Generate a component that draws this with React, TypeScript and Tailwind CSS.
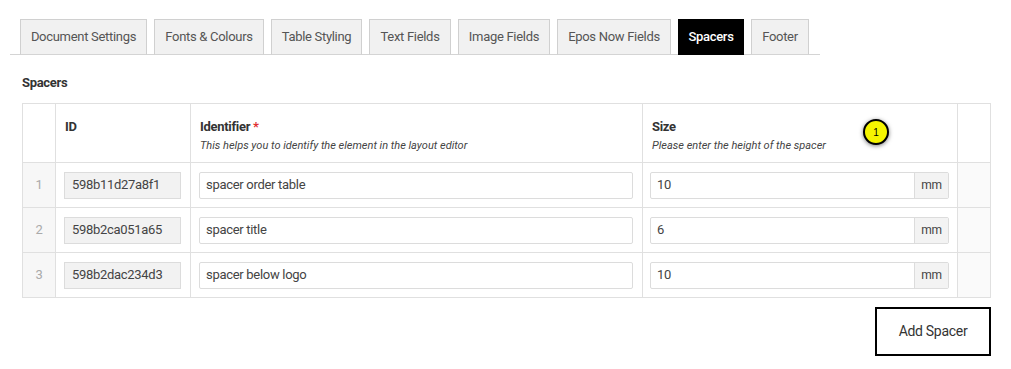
import React from 'react';

const tabs = [
  { label: 'Document Settings', w: 'w-[127px]' },
  { label: 'Fonts & Colours', w: 'w-[110px]' },
  { label: 'Table Styling', w: 'w-[91px]' },
  { label: 'Text Fields', w: 'w-[82px]' },
  { label: 'Image Fields', w: 'w-[92px]' },
  { label: 'Epos Now Fields', w: 'w-[114px]' },
  { label: 'Spacers', w: 'w-[66px]' },
  { label: 'Footer', w: 'w-[58px]' },
];

const rows = [
  { id: '598b11d27a8f1', name: 'spacer order table', size: '10' },
  { id: '598b2ca051a65', name: 'spacer title', size: '6' },
  { id: '598b2dac234d3', name: 'spacer below logo', size: '10' },
];

export default function App() {
  return (
    <div className="w-[1011px] h-[369px] bg-white text-[#333] overflow-hidden tracking-[-0.3px]" style={{ fontFamily: 'Roboto, "Liberation Sans", sans-serif' }}>
      <div className="pt-[19px] pl-[10px]">
        <div className="w-[810px] flex gap-[7px] pl-[10px] border-b border-[#d4d4d4]">
          {tabs.map(t => (
            <div
              key={t.label}
              className={`${t.w} shrink-0 whitespace-nowrap h-[36px] -mb-px flex items-center justify-center text-[13px] border ${
                t.label === 'Spacers'
                  ? 'bg-black border-black text-white font-medium'
                  : 'bg-[#f1f1f1] border-[#d0d0d0] border-b-[#d4d4d4] text-[#555]'
              }`}
            >
              {t.label}
            </div>
          ))}
        </div>
      </div>

      <div className="px-[22px]">
        <h3 className="mt-[20px] text-[13px] font-bold text-[#333] leading-[16px]">Spacers</h3>

        <div className="relative mt-[12px]">
          <table className="w-[968px] border-collapse table-fixed text-[13px]">
            <colgroup>
              <col className="w-[33px]" />
              <col className="w-[135px]" />
              <col className="w-[452px]" />
              <col className="w-[315px]" />
              <col className="w-[33px]" />
            </colgroup>
            <thead>
              <tr className="h-[59px]">
                <th className="border border-[#e0e0e0]" />
                <th className="border border-[#e0e0e0] text-left align-top pt-[15px] px-[9px] font-bold text-[13px] text-[#333] leading-[16px]">ID</th>
                <th className="border border-[#e0e0e0] text-left align-top pt-[15px] px-[9px]">
                  <div className="font-bold text-[13px] text-[#333] leading-[16px]">
                    Identifier <span className="text-[#e03030]">*</span>
                  </div>
                  <div className="italic font-normal text-[11px] text-[#444] mt-[4px] leading-[14px] tracking-normal">This helps you to identify the element in the layout editor</div>
                </th>
                <th className="border border-[#e0e0e0] text-left align-top pt-[15px] px-[9px]">
                  <div className="font-bold text-[13px] text-[#333] leading-[16px]">Size</div>
                  <div className="italic font-normal text-[11px] text-[#444] mt-[4px] leading-[14px] tracking-normal">Please enter the height of the spacer</div>
                </th>
                <th className="border border-[#e0e0e0]" />
              </tr>
            </thead>
            <tbody>
              {rows.map((r, i) => (
                <tr key={r.id} className="h-[45px]">
                  <td className="border border-[#e0e0e0] bg-[#f7f7f7] text-center text-[#aaa] text-[13px]">{i + 1}</td>
                  <td className="border border-[#e0e0e0] px-[8px]">
                    <div className="h-[27px] w-[117px] bg-[#f2f2f2] border border-[#dcdcdc] flex items-center px-[7px] text-[#444]">{r.id}</div>
                  </td>
                  <td className="border border-[#e0e0e0] px-[8px]">
                    <div className="h-[27px] w-[434px] bg-white border border-[#dcdcdc] rounded-[2px] flex items-center px-[6px] text-[#444]">{r.name}</div>
                  </td>
                  <td className="border border-[#e0e0e0] px-[7px]">
                    <div className="h-[27px] w-[299px] flex border border-[#dcdcdc] rounded-[2px] text-[#444]">
                      <div className="flex-1 flex items-center px-[6px]">{r.size}</div>
                      <div className="w-[34px] bg-[#f3f3f3] border-l border-[#dcdcdc] flex items-center justify-center text-[12px]">mm</div>
                    </div>
                  </td>
                  <td className="border border-[#e0e0e0] bg-[#fafafa]" />
                </tr>
              ))}
            </tbody>
          </table>

          <div className="absolute left-[841px] top-[16px] w-[26px] h-[26px] rounded-full bg-[#f5f500] border-2 border-black shadow-[0_1px_4px_rgba(0,0,0,0.5)] flex items-center justify-center text-[10px] text-black tracking-normal" style={{ fontFamily: '"Liberation Sans", Arial, sans-serif' }}>
            1
          </div>
        </div>

        <div className="w-[969px] flex justify-end mt-[9px]">
          <button className="w-[116px] h-[49px] border-2 border-black bg-white text-[14px] text-[#333]">Add Spacer</button>
        </div>
      </div>
    </div>
  );
}
